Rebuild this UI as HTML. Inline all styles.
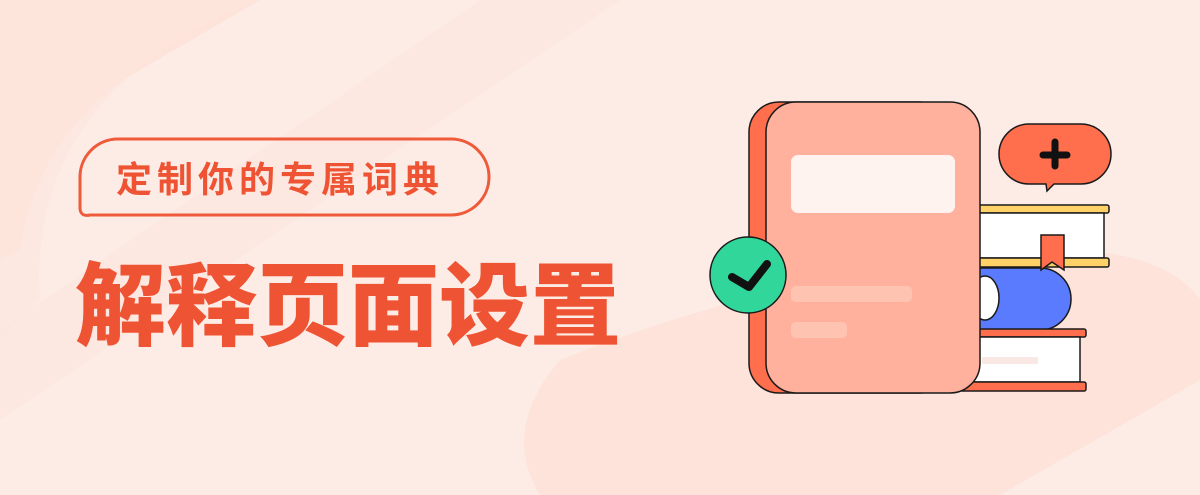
<!DOCTYPE html>
<html><head><meta charset="utf-8"><style>
html,body{margin:0;padding:0}
body{width:1200px;height:495px;overflow:hidden;position:relative;background:#fdece6;font-family:"Liberation Sans","Noto Sans CJK SC",sans-serif}
.bg{position:absolute;left:0;top:0}
.badge{position:absolute;left:78px;top:137px;width:413px;height:80px}
.sub{position:absolute;left:116px;top:159px;font-size:36px;font-weight:700;color:#ee5433;letter-spacing:5px;line-height:42px;white-space:nowrap}
.title{position:absolute;left:75px;top:253px;font-size:91px;font-weight:900;color:#ee5433;letter-spacing:0px;line-height:110px;white-space:nowrap}
</style></head><body>
<svg class="bg" width="1200" height="495">
<path d="M0 0 L260 0 L140 70 Q40 130 20 250 L0 260Z" fill="#fde3da"/>
<path d="M260 0 Q200 20 150 60 Q30 150 40 300 L0 340 L0 0Z" fill="#fde6de" opacity=".6"/>
<path d="M620 0 L0 420 L0 330 L480 0Z" fill="#fde5dd" opacity=".6"/>
<path d="M560 360 Q760 280 1000 250 Q1160 240 1200 300 L1200 495 L540 495 Q500 430 560 360Z" fill="#fde3da"/>
<path d="M1200 380 L1000 495 L1200 495Z" fill="#fdece6"/>
</svg>
<svg class="badge" viewBox="0 0 413 80">
<path d="M40 2 H373 A38 38 0 0 1 373 78 H12 Q3 80 2 72 V40 A38 38 0 0 1 40 2Z" fill="none" stroke="#ee5a3a" stroke-width="3"/>
</svg>
<div class="sub">定制你的专属词典</div>
<div class="title">解释页面设置</div>
<svg class="bg" width="1200" height="495">
<g stroke="#1a1a1a" stroke-width="1.5">
<rect x="968" y="205" width="141" height="8" rx="2" fill="#ffd166"/>
<rect x="968" y="213" width="136" height="45" fill="#fff"/>
<rect x="968" y="258" width="141" height="9" rx="2" fill="#ffd166"/>
<path d="M960 268 H1040 A31 31 0 0 1 1040 330 H960Z" fill="#5b7bff"/>
<ellipse cx="985" cy="298" rx="14" ry="22" fill="#fff"/>
<path d="M1041 235 H1064 V270 L1052 262 L1041 270Z" fill="#ff6e4d"/>
<rect x="960" y="329" width="126" height="8" rx="2" fill="#ff6e4d"/>
<rect x="960" y="337" width="120" height="45" fill="#fff"/>
<rect x="960" y="382" width="126" height="9" rx="2" fill="#ff6e4d"/>
<rect x="749" y="102" width="200" height="291" rx="30" fill="#ff6e4d"/>
<rect x="766" y="102" width="214" height="291" rx="30" fill="#ffb19e"/>
</g>
<rect x="982" y="357" width="56" height="7" fill="#f9e8e4"/>
<rect x="791" y="155" width="164" height="58" rx="7" fill="#fff3f0"/>
<rect x="791" y="286" width="121" height="16" rx="5" fill="#ffc3b2"/>
<rect x="791" y="322" width="56" height="16" rx="5" fill="#ffc3b2"/>
<circle cx="748" cy="275" r="38" fill="#31d69b" stroke="#1a1a1a" stroke-width="1.5"/>
<path d="M732 277 L749 287 L767 264" fill="none" stroke="#111" stroke-width="8" stroke-linecap="round" stroke-linejoin="round"/>
<path d="M1029 124 H1081 A30 30 0 0 1 1081 184 H1054 L1047 191 L1046 184 H1029 A30 30 0 0 1 1029 124Z" fill="#ff6e4d" stroke="#1a1a1a" stroke-width="1.5"/>
<path d="M1055 142 V166 M1043 155 H1067" stroke="#111" stroke-width="7" stroke-linecap="round"/>
</svg>
</body></html>
